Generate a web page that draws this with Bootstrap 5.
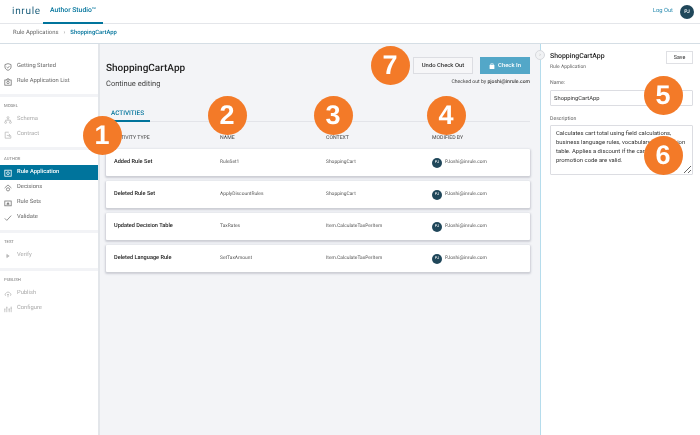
<!DOCTYPE html>
<html lang="en">
<head>
    <meta charset="UTF-8">
    <meta name="viewport" content="width=device-width, initial-scale=1">
    <title>Author Studio</title>
    <link href="https://cdn.jsdelivr.net/npm/bootstrap@5.3.2/dist/css/bootstrap.min.css" rel="stylesheet">
    <script src="https://cdn.jsdelivr.net/npm/bootstrap@5.3.2/dist/js/bootstrap.bundle.min.js"></script>
    <style>
        html, body { height: 435px; overflow: hidden; }
        body { font-family: Roboto, sans-serif; font-size: 5.8px; color: #333; background: #fff; position: relative; line-height: 1.2; text-rendering: geometricPrecision; }
        /* own layers, so the tiny text is smoothed in grey without colour fringes */
        .topbar, .crumbs, .shell { will-change: transform; }

        /* top bars */
        .topbar { height: 24px; padding-left: 12px; padding-right: 6px; border-bottom: 1px solid #e4e6ea; }
        .brand-name { font-size: 10px; letter-spacing: .7px; color: #1d5f7c; width: 31px; }
        .studio-tab { height: 24px; padding: 0 7px; font-size: 6.8px; font-weight: 500; color: #00749c; border-bottom: 2px solid #00749c; display: flex; align-items: center; }
        .logout { color: #2a8cb0; font-size: 5.8px; margin-right: 7px; }
        .user-dot { width: 14px; height: 14px; border-radius: 50%; background: #20475a; color: #fff; font-size: 5px; font-weight: 500; }
        .crumbs { height: 20px; padding-left: 13px; font-size: 5.9px; color: #666; border-bottom: 1px solid #d5dee5; }
        .crumbs b { font-weight: 500; color: #00749c; }
        .crumbs i { font-style: normal; color: #999; margin: 0 5px; }

        /* left menu */
        .shell { height: 391px; }
        .side { width: 100px; border-right: 2px solid #e3e6ea; flex: none; padding-top: 15px; }
        .side-group { border-bottom: 3px solid #f2f3f6; padding-bottom: 5px; margin-bottom: 5px; }
        .side-group:last-child { border-bottom: 0; }
        .side-label { font-size: 4.2px; color: #777; height: 10px; padding: 2px 0 0 4px; }
        .side-link { height: 15px; padding-left: 4px; gap: 5px; color: #666; font-size: 5.8px; }
        .side-link svg { width: 8px; height: 8px; flex: none; fill: none; stroke: #777; stroke-width: 1; }
        .side-link.off { color: #aaa; }
        .side-link.off svg { stroke: #bbb; }
        .side-link.on { background: #00749c; color: #fff; font-weight: 500; }
        .side-link.on svg { stroke: #fff; }

        /* main column */
        .work { width: 441px; flex: none; background: #f3f4f7; padding: 13px 10px 0 6px; border-right: 1px solid #b5dcec; }
        .work-head { height: 50px; }
        .work-title { font-size: 10px; font-weight: 500; color: #222; margin: 6px 0 4px; }
        .work-sub { font-size: 7.500px; color: #444; }
        .head-btns { gap: 7px; }
        .btn-undo { width: 60px; height: 17px; font-size: 5.9px; font-weight: 500; background: #f6f6f8; border: 1px solid #dcdde2; border-radius: 0; color: #333; padding: 0; }
        .btn-checkin { width: 50px; height: 17px; font-size: 5.9px; font-weight: 500; background: #53a7c8; border: 1px solid #53a7c8; border-radius: 0; color: #fff; padding: 0; gap: 3px; }
        .checked-by { font-size: 5.100px; color: #444; margin-top: 5px; }
        .checked-by b { font-weight: 500; }
        .tabs-line { height: 15px; border-bottom: 1px solid #e3e4e9; }
        .tab-on { width: 44px; height: 15px; padding-left: 5px; color: #00749c; font-weight: 500; font-size: 6.400px; border-bottom: 2px solid #00749c; }
        .col-heads { height: 27px; padding-top: 5px; font-size: 5.2px; color: #444; }
        .col-heads > div, .act-card > div { padding-left: 8px; }
        .act-card { height: 27px; margin-bottom: 5px; border: 0; border-radius: 1px; box-shadow: 0 1px 2px 1px rgba(70, 75, 95, .22); font-size: 4.9px; color: #555; }
        .act-type { font-size: 5.600px; font-weight: 500; color: #222; }
        .mini-dot { width: 10px; height: 10px; border-radius: 50%; background: #20475a; color: #fff; font-size: 4px; margin-right: 3px; flex: none; }

        /* right panel */
        .detail { flex: 1; padding: 7px 7px 0 9px; position: relative; }
        .detail-head { margin-bottom: 10px; }
        .detail-title { font-size: 6.9px; font-weight: 500; color: #222; margin-top: 1px; }
        .detail-kind { font-size: 5px; color: #666; margin-top: 4px; }
        .btn-save { width: 27px; height: 13px; font-size: 5.4px; padding: 0; border: 1px solid #dfe0e4; border-radius: 0; color: #333; background: #fff; }
        .field-label { font-size: 5.2px; color: #666; margin-bottom: 3px; }
        .field-input { height: 16px; min-height: 0; border: 1px solid #dcdde2; border-radius: 1px; padding: 0 3px; font-size: 5.8px; color: #333; margin-bottom: 10px; }
        .field-text { height: 50px; min-height: 0; border: 1px solid #dcdde2; border-radius: 1px; padding: 3.500px 5px; font-size: 5.900px; line-height: 8.900px; color: #333; resize: vertical; }
        .fold-dot { position: absolute; left: -6px; top: 6px; width: 10px; height: 10px; border-radius: 50%; background: #f1f2f4; border: 1px solid #d6d8dc; color: #aaa; font-size: 5px; }

        /* numbered callouts lying over the screen */
        .callout { position: absolute; width: 39px; height: 39px; margin: -19.5px 0 0 -19.5px; border-radius: 50%; background: #f37a28; color: #fff; font-size: 27px; font-weight: 700; font-family: "Liberation Sans", sans-serif; z-index: 5; }
    </style>
</head>
<body>
    <header class="topbar d-flex align-items-center">
        <span class="brand-name">inrule</span>
        <span class="studio-tab">Author Studio™</span>
        <span class="logout ms-auto">Log Out</span>
        <span class="user-dot d-flex align-items-center justify-content-center">PJ</span>
    </header>
    <div class="crumbs d-flex align-items-center">Rule Applications<i>›</i><b>ShoppingCartApp</b></div>

    <div class="shell d-flex">
        <nav class="side">
            <div class="side-group">
                <div class="side-link d-flex align-items-center"><svg viewBox="0 0 10 10"><path d="M5 .8 8.8 2v3c0 2-1.6 3.4-3.8 4.2C2.800 8.400 1.200 7 1.200 5V2z"/><path d="m3.300 5 1.300 1.300 2.200-2.400"/></svg>Getting Started</div>
                <div class="side-link d-flex align-items-center"><svg viewBox="0 0 10 10"><rect x="1" y="2.500" width="8" height="6.500"/><path d="M3 2.500 4 1h2l1 1.500"/><circle cx="5" cy="5.700" r="1.500"/></svg>Rule Application List</div>
            </div>
            <div class="side-group">
                <div class="side-label">MODEL</div>
                <div class="side-link off d-flex align-items-center"><svg viewBox="0 0 10 10"><circle cx="5" cy="2" r="1.200"/><circle cx="2" cy="8" r="1.200"/><circle cx="8" cy="8" r="1.200"/><path d="M5 3.200v2M2 6.800V5.200h6v1.600"/></svg>Schema</div>
                <div class="side-link off d-flex align-items-center"><svg viewBox="0 0 10 10"><path d="M8.500 6v3h-7V1.500H6"/><path d="M3.500 5.500h4M6 3.500l2 2-2 2"/></svg>Contract</div>
            </div>
            <div class="side-group">
                <div class="side-label">AUTHOR</div>
                <div class="side-link on d-flex align-items-center"><svg viewBox="0 0 10 10"><rect x="1" y="1.500" width="8" height="7.500"/><circle cx="5" cy="5.200" r="1.700"/></svg>Rule Application</div>
                <div class="side-link d-flex align-items-center"><svg viewBox="0 0 10 10"><path d="M.8 5 5 1.200 9.200 5"/><circle cx="5" cy="6.700" r="2"/></svg>Decisions</div>
                <div class="side-link d-flex align-items-center"><svg viewBox="0 0 10 10"><rect x="1" y="2.500" width="8" height="6"/><path d="m3.500 6.500 1.500-2 1.500 2z" fill="#777"/></svg>Rule Sets</div>
                <div class="side-link d-flex align-items-center"><svg viewBox="0 0 10 10"><path d="m1 5.500 2.500 2.500L9 2"/></svg>Validate</div>
            </div>
            <div class="side-group">
                <div class="side-label">TEST</div>
                <div class="side-link off d-flex align-items-center"><svg viewBox="0 0 10 10"><path d="m3.500 3 3 2-3 2z" fill="#bbb"/></svg>Verify</div>
            </div>
            <div class="side-group">
                <div class="side-label">PUBLISH</div>
                <div class="side-link off d-flex align-items-center"><svg viewBox="0 0 10 10"><path d="M2.500 7C1 7 .8 4.500 2.500 4.200 3 2 7 2 7.500 4.200 9.200 4.500 9 7 7.500 7"/><path d="M5 9V5M3.700 6.300 5 5l1.300 1.300"/></svg>Publish</div>
                <div class="side-link off d-flex align-items-center"><svg viewBox="0 0 10 10"><path d="M1 9V5M3.500 9V2M6.500 9V4M9 9V2"/><path d="M.2 5h1.600M2.700 3.500h1.600M5.700 6h1.600M8.200 4h1.600"/></svg>Configure</div>
            </div>
        </nav>

        <main class="work">
            <div class="work-head d-flex justify-content-between">
                <div>
                    <div class="work-title">ShoppingCartApp</div>
                    <div class="work-sub">Continue editing</div>
                </div>
                <div class="d-flex flex-column align-items-end">
                    <div class="head-btns d-flex">
                        <button type="button" class="btn btn-undo">Undo Check Out</button>
                        <button type="button" class="btn btn-checkin d-flex align-items-center justify-content-center">
                            <svg width="6" height="6" viewBox="0 0 10 10" fill="#fff"><rect x="1" y="3" width="8" height="7" rx="1"/><path d="M3 3.500V2a2 2 0 0 1 4 0v1.500" fill="none" stroke="#fff"/></svg>
                            Check In
                        </button>
                    </div>
                    <div class="checked-by">Checked out by <b>pjoshi@inrule.com</b></div>
                </div>
            </div>
            <div class="tabs-line"><div class="tab-on d-flex align-items-center">ACTIVITIES</div></div>
            <div class="col-heads row g-0 align-items-center">
                <div class="col-3">ACTIVITY TYPE</div>
                <div class="col-3">NAME</div>
                <div class="col-3">CONTEXT</div>
                <div class="col-3">MODIFIED BY</div>
            </div>
            <div class="card act-card flex-row align-items-center">
                <div class="col-3 act-type">Added Rule Set</div>
                <div class="col-3">RuleSet1</div>
                <div class="col-3">ShoppingCart</div>
                <div class="col-3 d-flex align-items-center"><span class="mini-dot d-flex align-items-center justify-content-center">PJ</span>PJoshi@inrule.com</div>
            </div>
            <div class="card act-card flex-row align-items-center">
                <div class="col-3 act-type">Deleted Rule Set</div>
                <div class="col-3">ApplyDiscountRules</div>
                <div class="col-3">ShoppingCart</div>
                <div class="col-3 d-flex align-items-center"><span class="mini-dot d-flex align-items-center justify-content-center">PJ</span>PJoshi@inrule.com</div>
            </div>
            <div class="card act-card flex-row align-items-center">
                <div class="col-3 act-type">Updated Decision Table</div>
                <div class="col-3">TaxRates</div>
                <div class="col-3">Item.CalculateTaxPerItem</div>
                <div class="col-3 d-flex align-items-center"><span class="mini-dot d-flex align-items-center justify-content-center">PJ</span>PJoshi@inrule.com</div>
            </div>
            <div class="card act-card flex-row align-items-center">
                <div class="col-3 act-type">Deleted Language Rule</div>
                <div class="col-3">SetTaxAmount</div>
                <div class="col-3">Item.CalculateTaxPerItem</div>
                <div class="col-3 d-flex align-items-center"><span class="mini-dot d-flex align-items-center justify-content-center">PJ</span>PJoshi@inrule.com</div>
            </div>
        </main>

        <aside class="detail">
            <span class="fold-dot d-flex align-items-center justify-content-center">›</span>
            <div class="detail-head d-flex justify-content-between">
                <div>
                    <div class="detail-title">ShoppingCartApp</div>
                    <div class="detail-kind">Rule Application</div>
                </div>
                <button type="button" class="btn btn-save">Save</button>
            </div>
            <div class="field-label">Name:</div>
            <input class="form-control field-input" value="ShoppingCartApp">
            <div class="field-label">Description</div>
            <textarea class="form-control field-text">Calculates cart total using field calculations, business language rules, vocabulary and decision table. Applies a discount if the cart items and promotion code are valid.</textarea>
        </aside>
    </div>

    <span class="callout d-flex align-items-center justify-content-center" style="left:102px;top:135.500px">1</span>
    <span class="callout d-flex align-items-center justify-content-center" style="left:227px;top:115px">2</span>
    <span class="callout d-flex align-items-center justify-content-center" style="left:333px;top:115px">3</span>
    <span class="callout d-flex align-items-center justify-content-center" style="left:446px;top:115px">4</span>
    <span class="callout d-flex align-items-center justify-content-center" style="left:663px;top:95px">5</span>
    <span class="callout d-flex align-items-center justify-content-center" style="left:663px;top:155px">6</span>
    <span class="callout d-flex align-items-center justify-content-center" style="left:390px;top:65px">7</span>
</body>
</html>
